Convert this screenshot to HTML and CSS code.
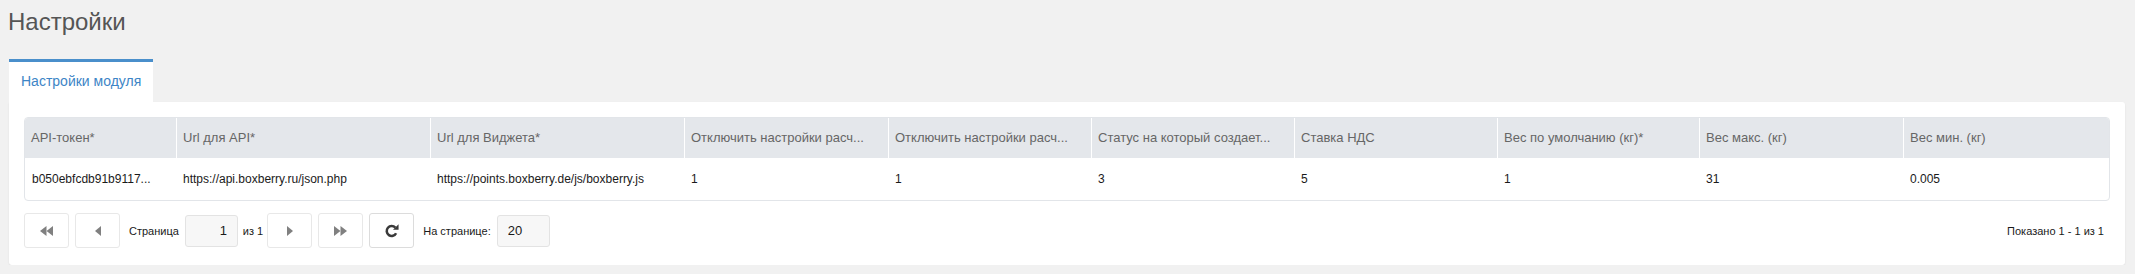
FILE: index.html
```html
<!DOCTYPE html>
<html lang="ru">
<head>
    <meta charset="UTF-8">
    <meta name="viewport" content="width=device-width, initial-scale=1.0">
    <title>Настройки</title>
    <link rel="stylesheet" href="styles.css">
</head>
<body>
    <div class="page">
        <h1 class="page-title">Настройки</h1>

        <div class="tabs">
            <div class="tab active">Настройки модуля</div>
        </div>

        <div class="panel">
            <!-- Module settings grid -->
            <table class="grid">
                <colgroup>
                    <col style="width: 151px">
                    <col style="width: 254px">
                    <col style="width: 254px">
                    <col style="width: 204px">
                    <col style="width: 203px">
                    <col style="width: 203px">
                    <col style="width: 203px">
                    <col style="width: 202px">
                    <col style="width: 204px">
                    <col>
                </colgroup>
                <thead>
                    <tr>
                        <th>API-токен*</th>
                        <th>Url для API*</th>
                        <th>Url для Виджета*</th>
                        <th>Отключить настройки расч...</th>
                        <th>Отключить настройки расч...</th>
                        <th>Статус на который создает...</th>
                        <th>Ставка НДС</th>
                        <th>Вес по умолчанию (кг)*</th>
                        <th>Вес макс. (кг)</th>
                        <th>Вес мин. (кг)</th>
                    </tr>
                </thead>
                <tbody>
                    <tr>
                        <td>b050ebfcdb91b9117...</td>
                        <td>https://api.boxberry.ru/json.php</td>
                        <td>https://points.boxberry.de/js/boxberry.js</td>
                        <td>1</td>
                        <td>1</td>
                        <td>3</td>
                        <td>5</td>
                        <td>1</td>
                        <td>31</td>
                        <td>0.005</td>
                    </tr>
                </tbody>
            </table>

            <!-- Pager -->
            <div class="pager">
                <button class="pg-btn" disabled>
                    <svg width="13" height="10" viewBox="0 0 13 10"><polygon points="6.5,0 0,5 6.5,10"/><polygon points="13,0 6.5,5 13,10"/></svg>
                </button>
                <button class="pg-btn" disabled>
                    <svg width="6" height="10" viewBox="0 0 6 10"><polygon points="6,0 0,5 6,10"/></svg>
                </button>
                <span class="pg-label pg-first">Страница</span>
                <input class="pg-input pg-page" type="text" value="1" readonly>
                <span class="pg-label">из 1</span>
                <button class="pg-btn" disabled>
                    <svg width="6" height="10" viewBox="0 0 6 10"><polygon points="0,0 6,5 0,10"/></svg>
                </button>
                <button class="pg-btn" disabled>
                    <svg width="13" height="10" viewBox="0 0 13 10"><polygon points="0,0 6.5,5 0,10"/><polygon points="6.5,0 13,5 6.5,10"/></svg>
                </button>
                <button class="pg-btn pg-refresh">
                    <svg width="14" height="14" viewBox="0 0 13 13">
                        <path d="M10.3 8.6 A4.6 4.6 0 1 1 9.6 3.4" fill="none" stroke="currentColor" stroke-width="2.4"/>
                        <polygon points="7.4,5.4 12.6,5.4 12.6,0.2"/>
                    </svg>
                </button>
                <span class="pg-label pg-first">На странице:</span>
                <input class="pg-input" type="text" value="20" readonly>

                <span class="pg-info">Показано 1 - 1 из 1</span>
            </div>
        </div>
    </div>
</body>
</html>
```
FILE: styles.css
```css
/* Global Styles */
body {
    font-family: 'Liberation Sans', Arial, sans-serif;
    margin: 0;
    padding: 0;
    background-color: #f1f1f1;
}

.page {
    padding: 9px 10px 0 9px;
}

.page-title {
    margin: 0 0 0 -1px;
    font-size: 24px;
    line-height: 26px;
    font-weight: normal;
    color: #555;
}

/* Tabs */
.tabs {
    display: flex;
    margin-top: 24px;
}

.tab {
    width: 144px;
    box-sizing: border-box;
    padding: 9px 0 11px 12px;
    line-height: 20px;
    font-size: 14px;
    white-space: nowrap;
    color: #3d85c6;
    background-color: #fff;
    border-top: 3px solid #4a8fcb;
}

/* Panel */
.panel {
    background-color: #fff;
    padding: 15px 15px 17px;
    border-radius: 0 3px 3px 3px;
    box-shadow: 0 1px 2px rgba(0, 0, 0, 0.08);
}

/* Table styles */
.grid {
    width: 100%;
    table-layout: fixed;
    border-collapse: separate;
    border-spacing: 0;
    border: 1px solid #e2e5e9;
    border-radius: 4px;
    overflow: hidden;
}

.grid th,
.grid td {
    text-align: left;
    white-space: nowrap;
    overflow: hidden;
    line-height: 16px;
}

.grid th {
    padding: 12px 6px;
    font-size: 13px;
    font-weight: normal;
    color: #666;
    background-color: #e4e7eb;
    border-left: 1px solid #fff;
}

.grid th:first-child {
    border-left: none;
}

.grid td {
    padding: 13px 7px;
    font-size: 12px;
    color: #1a1a1a;
}

/* Pager */
.pager {
    display: flex;
    align-items: center;
    margin-top: 12px;
    height: 35px;
}

.pg-btn {
    width: 45px;
    height: 35px;
    margin-right: 6px;
    padding: 0;
    display: flex;
    align-items: center;
    justify-content: center;
    background-color: #fff;
    border: 1px solid #e8e8e8;
    border-radius: 3px;
    color: #808080;
    fill: #808080;
}

.pg-btn:disabled {
    cursor: default;
}

.pg-refresh {
    border-color: #dcdcdc;
    color: #3a3a3a;
    fill: #3a3a3a;
    cursor: pointer;
}

.pg-label {
    font-size: 11px;
    color: #1a1a1a;
    margin: 0 4px 0 5px;
}

.pg-first {
    margin-left: 3px;
    margin-right: 6px;
}

.pg-input {
    width: 53px;
    height: 32px;
    box-sizing: border-box;
    padding: 0 10px;
    font-family: inherit;
    font-size: 13px;
    color: #1a1a1a;
    background-color: #f7f7f7;
    border: 1px solid #e3e3e3;
    border-radius: 3px;
    outline: none;
}

.pg-page {
    text-align: right;
}

.pg-info {
    margin-left: auto;
    margin-right: 6px;
    font-size: 11px;
    color: #1a1a1a;
}
```
